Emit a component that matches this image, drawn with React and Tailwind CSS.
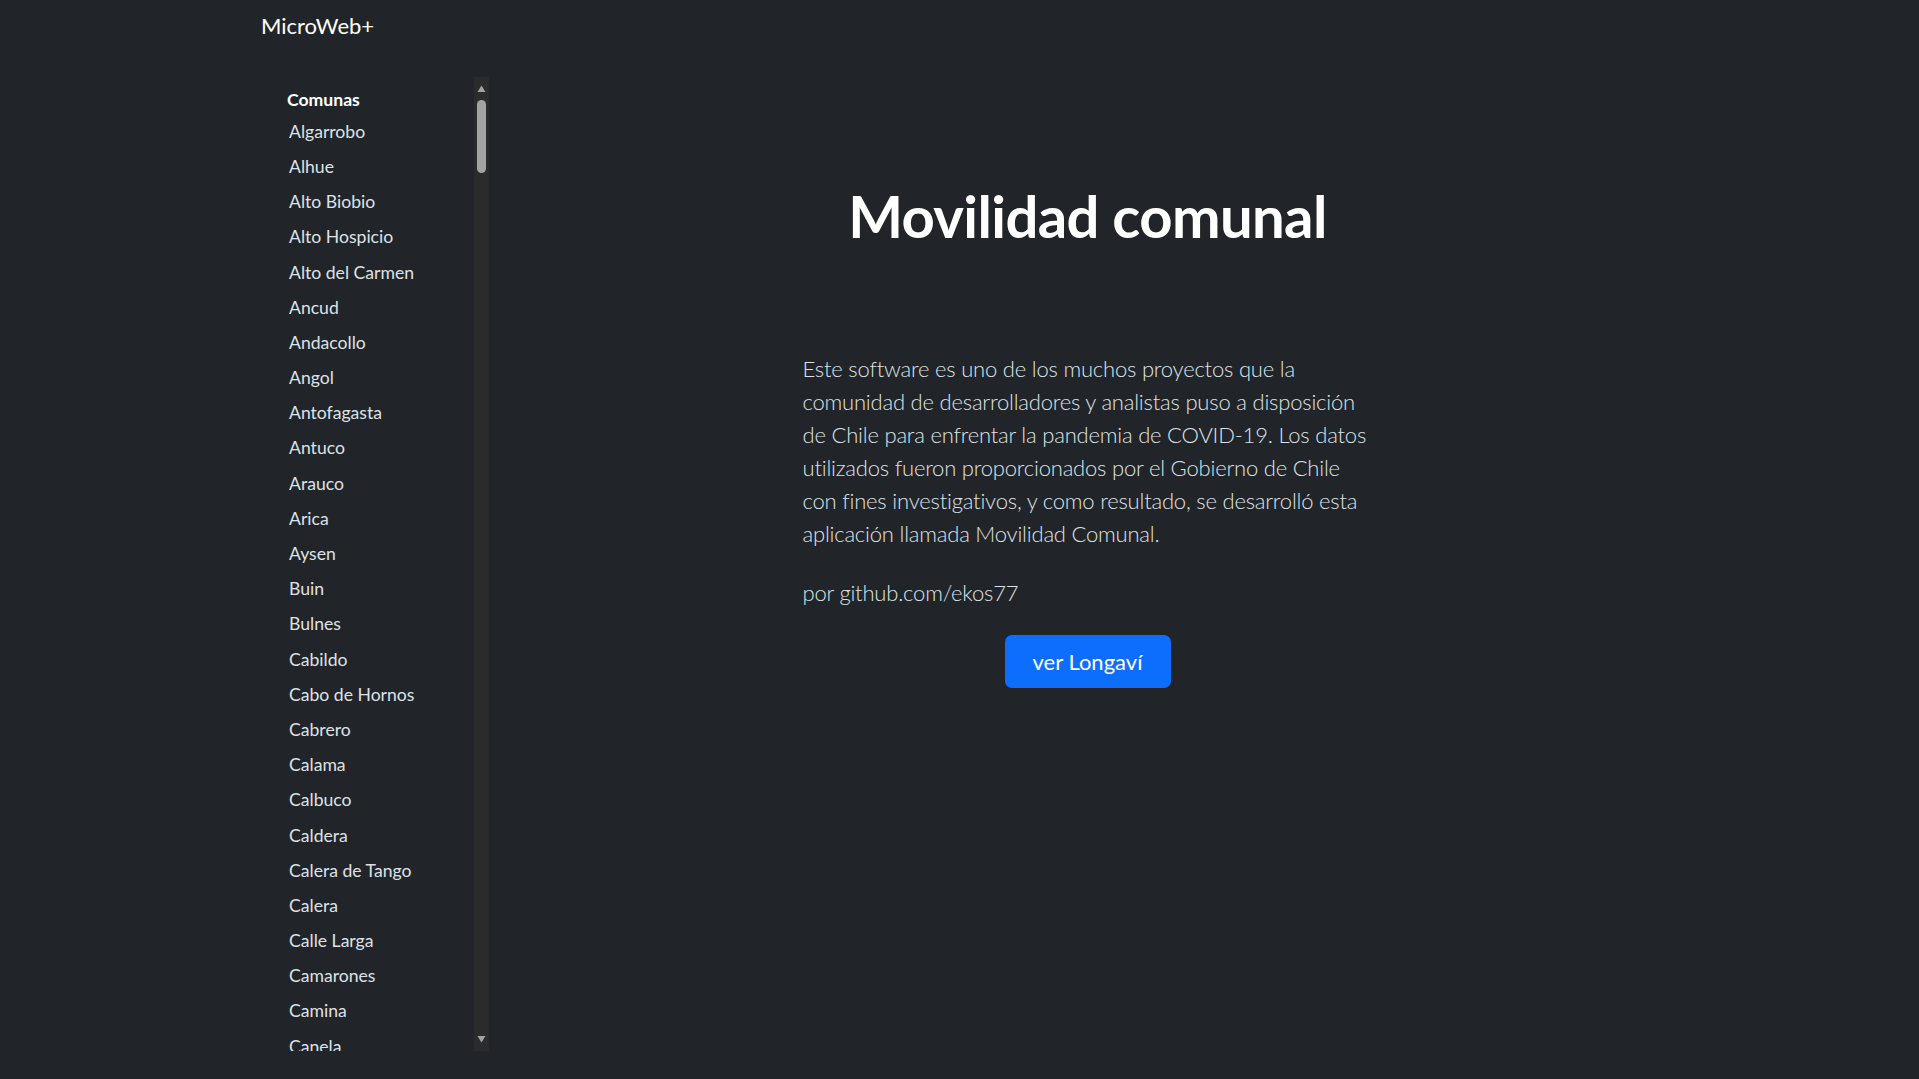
import React from "react";

const comunas = [
  "Algarrobo", "Alhue", "Alto Biobio", "Alto Hospicio", "Alto del Carmen", "Ancud",
  "Andacollo", "Angol", "Antofagasta", "Antuco", "Arauco", "Arica", "Aysen", "Buin",
  "Bulnes", "Cabildo", "Cabo de Hornos", "Cabrero", "Calama", "Calbuco", "Caldera",
  "Calera de Tango", "Calera", "Calle Larga", "Camarones", "Camina", "Canela",
  "Canete", "Carahue", "Cartagena",
];

export default function App() {
  return (
    <div className="min-h-screen w-full bg-[#212529] font-['Lato',sans-serif] text-[#dee2e6]">
      <nav className="h-[50px] flex items-center pl-[261px]">
        <span className="text-[22px] leading-[33px] text-white">MicroWeb+</span>
      </nav>
      <div className="w-[1453px] ml-[233px] flex pt-[27px]">
        <aside className="w-[256px] h-[974px] flex">
          <div className="flex-1 overflow-hidden pl-[54px] pt-[10px]">
            <div className="text-[17.6px] leading-[26.4px] font-bold text-white">Comunas</div>
            <ul className="mt-px pl-[2px]">
              {comunas.map((c) => (
                <li key={c} className="text-[17.6px] leading-[26.4px] py-[4.4px] text-[#dee2e6] whitespace-nowrap">
                  {c}
                </li>
              ))}
            </ul>
          </div>
          <div className="w-[15px] h-full bg-[#2b2b2b] flex flex-col items-center">
            <svg width="9" height="8" viewBox="0 0 9 8" className="mt-[8px] shrink-0">
              <path d="M4.5 0.5 L8.5 7 L0.5 7 Z" fill="#a3a3a3" />
            </svg>
            <div className="w-[9px] h-[73px] mt-[7px] rounded-full bg-[#a3a3a3]" />
            <div className="flex-1" />
            <svg width="9" height="8" viewBox="0 0 9 8" className="mb-[8px] shrink-0">
              <path d="M0.5 1 L8.5 1 L4.5 7.5 Z" fill="#a3a3a3" />
            </svg>
          </div>
        </aside>
        <main className="flex-1 flex flex-col items-center">
          <h1 className="mt-[102px] text-[58px] leading-[74px] font-bold tracking-[-0.6px] text-white">Movilidad comunal</h1>
          <div className="w-[570px] mt-[99px]">
            <p className="text-[22px] leading-[33px] font-light tracking-[-0.2px] whitespace-nowrap">
              Este software es uno de los muchos proyectos que la<br />
              comunidad de desarrolladores y analistas puso a disposición<br />
              de Chile para enfrentar la pandemia de COVID-19. Los datos<br />
              utilizados fueron proporcionados por el Gobierno de Chile<br />
              con fines investigativos, y como resultado, se desarrolló esta<br />
              aplicación llamada Movilidad Comunal.
            </p>
            <p className="mt-[26px] text-[22px] leading-[33px] font-light tracking-[-0.2px]">por github.com/ekos77</p>
          </div>
          <button className="mt-[26px] w-[166px] h-[53px] rounded-[7px] bg-[#0d6efd] text-white text-[22px] leading-[33px]">
            ver Longaví
          </button>
        </main>
      </div>
    </div>
  );
}
